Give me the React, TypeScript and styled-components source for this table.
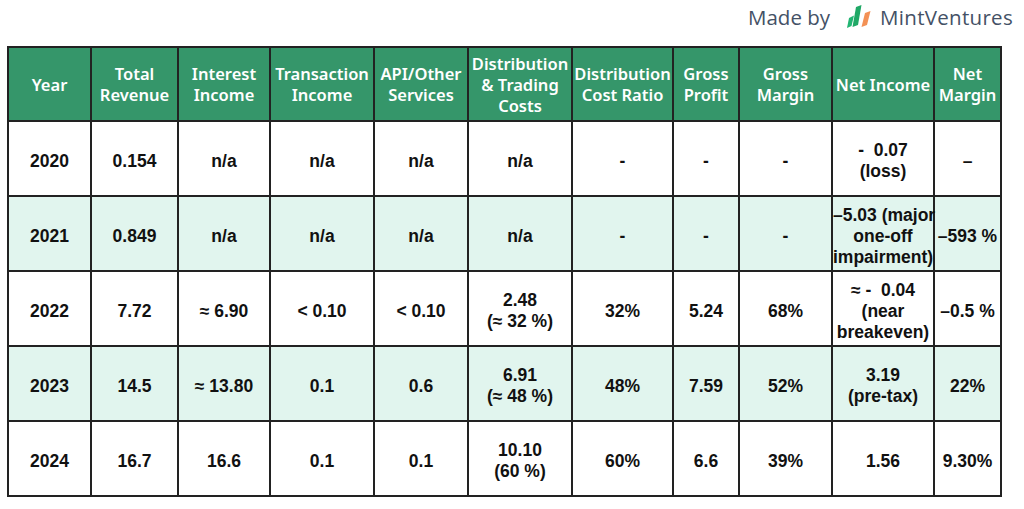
import React from 'react';
import styled, { createGlobalStyle } from 'styled-components';

const GlobalStyle = createGlobalStyle`
  html, body {
    margin: 0;
    padding: 0;
    background: #ffffff;
  }
  body {
    font-family: "Liberation Sans", Arial, sans-serif;
  }
`;

interface Row {
  cells: React.ReactNode[];
}

const headers: React.ReactNode[] = [
  'Year',
  <>Total<br />Revenue</>,
  <>Interest<br />Income</>,
  <>Transaction<br />Income</>,
  <>API/Other<br />Services</>,
  <>Distribution<br />&amp; Trading<br />Costs</>,
  <>Distribution<br />Cost Ratio</>,
  <>Gross<br />Profit</>,
  <>Gross<br />Margin</>,
  'Net Income',
  <>Net<br />Margin</>,
];

const widths = [83, 87, 92, 104, 94, 104, 101, 66, 93, 102, 67];

const rows: Row[] = [
  { cells: ['2020', '0.154', 'n/a', 'n/a', 'n/a', 'n/a', '-', '-', '-', <>-&nbsp;&nbsp;0.07<br />(loss)</>, '–'] },
  { cells: ['2021', '0.849', 'n/a', 'n/a', 'n/a', 'n/a', '-', '-', '-', <>–5.03 (major<br />one-off<br />impairment)</>, '–593 %'] },
  { cells: ['2022', '7.72', '≈ 6.90', '< 0.10', '< 0.10', <>2.48<br />(≈ 32 %)</>, '32%', '5.24', '68%', <>≈ -&nbsp;&nbsp;0.04<br />(near<br />breakeven)</>, '–0.5 %'] },
  { cells: ['2023', '14.5', '≈ 13.80', '0.1', '0.6', <>6.91<br />(≈ 48 %)</>, '48%', '7.59', '52%', <>3.19<br />(pre-tax)</>, '22%'] },
  { cells: ['2024', '16.7', '16.6', '0.1', '0.1', <>10.10<br />(60 %)</>, '60%', '6.6', '39%', '1.56', '9.30%'] },
];

const MintMark: React.FC = () => (
  <svg width="28" height="28" viewBox="0 0 28 28">
    <polygon points="3,15 8,12.5 5.5,23 1,25" fill="#22b573" />
    <polygon points="10,4 15.5,2 12,22 6.5,24" fill="#1fa866" />
    <polygon points="19,10 24.5,8 21,22 15.5,24" fill="#f39155" />
  </svg>
);

const App: React.FC = () => {
  return (
    <Page>
      <GlobalStyle />
      <Brand>
        <MadeBy>Made by</MadeBy>
        <MintMark />
        <BrandName>MintVentures</BrandName>
      </Brand>
      <Table>
        <colgroup>
          {widths.map((w, i) => (
            <col key={i} style={{ width: w }} />
          ))}
        </colgroup>
        <thead>
          <tr>
            {headers.map((h, i) => (
              <HeadCell key={i}>{h}</HeadCell>
            ))}
          </tr>
        </thead>
        <tbody>
          {rows.map((row, ri) => (
            <BodyRow key={ri} $shaded={ri % 2 === 1}>
              {row.cells.map((c, ci) => (
                <Cell key={ci}>{c}</Cell>
              ))}
            </BodyRow>
          ))}
        </tbody>
      </Table>
    </Page>
  );
};

export default App;

const Page = styled.div`
  width: 1024px;
  height: 509px;
  overflow: hidden;
  padding-left: 7px;
  box-sizing: border-box;
`;

const Brand = styled.div`
  height: 46px;
  display: flex;
  align-items: center;
  justify-content: flex-end;
  padding-right: 11px;
  padding-bottom: 12px;
  box-sizing: border-box;
  gap: 6px;
  color: #445166;
  font-family: "Open Sans", "Noto Sans", sans-serif;
  font-size: 20.5px;
`;

const MadeBy = styled.span`
  margin-right: 10px;
`;

const BrandName = styled.span`
  letter-spacing: 0.3px;
`;

const Table = styled.table`
  table-layout: fixed;
  width: 994px;
  border-collapse: collapse;
  border: 2px solid #222;
`;

const HeadCell = styled.th`
  background: #35966a;
  color: #ffffff;
  height: 72px;
  padding: 0;
  border: 2px solid #222;
  font-family: "Noto Sans", "Open Sans", sans-serif;
  font-weight: 600;
  font-size: 16.5px;
  line-height: 21px;
  text-align: center;
  vertical-align: middle;
  white-space: nowrap;
`;

const BodyRow = styled.tr<{ $shaded: boolean }>`
  background: ${(p) => (p.$shaded ? '#e1f5ee' : '#ffffff')};
`;

const Cell = styled.td`
  height: 68px;
  padding: 5px 0 0;
  border: 2px solid #222;
  color: #111;
  font-weight: bold;
  font-size: 17.5px;
  line-height: 21px;
  text-align: center;
  vertical-align: middle;
  white-space: nowrap;
`;
